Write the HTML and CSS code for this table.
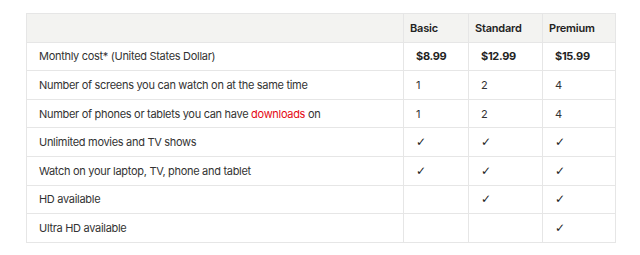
FILE: index.html
```html
<!DOCTYPE html>
<html lang="en">
<head>
  <meta charset="UTF-8">
  <title>Plans</title>
  <link rel="stylesheet" href="styles.css">
</head>
<body>
  <table class="plans">
    <colgroup>
      <col class="col-feature">
      <col class="col-basic">
      <col class="col-standard">
      <col class="col-premium">
    </colgroup>
    <thead>
      <tr><th></th><th>Basic</th><th>Standard</th><th>Premium</th></tr>
    </thead>
    <tbody>
      <tr class="price"><td>Monthly cost* (United States Dollar)</td><td>$8.99</td><td>$12.99</td><td>$15.99</td></tr>
      <tr><td>Number of screens you can watch on at the same time</td><td>1</td><td>2</td><td>4</td></tr>
      <tr><td>Number of phones or tablets you can have <a href="#" class="link">downloads</a> on</td><td>1</td><td>2</td><td>4</td></tr>
      <tr><td>Unlimited movies and TV shows</td><td class="check">✓</td><td class="check">✓</td><td class="check">✓</td></tr>
      <tr><td>Watch on your laptop, TV, phone and tablet</td><td class="check">✓</td><td class="check">✓</td><td class="check">✓</td></tr>
      <tr><td>HD available</td><td></td><td class="check">✓</td><td class="check">✓</td></tr>
      <tr><td>Ultra HD available</td><td></td><td></td><td class="check">✓</td></tr>
    </tbody>
  </table>
</body>
</html>
```

FILE: styles.css
```css
:root {
  --text: #333333;
  --border: #e6e6e6;
  --head-bg: #f3f3f1;
  --red: #e50914;
}
body {
  margin: 0;
  padding: 13px 25px 0 26px;
  background: #ffffff;
  font-family: Inter, "Noto Sans", sans-serif;
  color: var(--text);
}
.plans {
  width: 589px;
  border-collapse: collapse;
  table-layout: fixed;
  font-size: 11px;
  letter-spacing: -0.3px;
}
.col-feature { width: 377px; }
.col-basic { width: 65px; }
.col-standard { width: 74px; }
.col-premium { width: 73px; }

.plans th, .plans td {
  box-sizing: border-box;
  border: 1px solid var(--border);
  height: 28.6px;
  padding: 0 0 0 12px;
  text-align: left;
  vertical-align: middle;
  white-space: nowrap;
}
.plans thead th {
  padding-left: 6px;
  background: var(--head-bg);
  font-weight: 600;
  color: #222;
  letter-spacing: -0.2px;
}
.price td:not(:first-child) {
  font-weight: 700;
  color: #222;
}
.link { color: var(--red); text-decoration: none; }
.check {
  font-family: "DejaVu Sans", sans-serif;
  font-size: 12px;
  font-weight: 700;
  color: #222;
}
```
